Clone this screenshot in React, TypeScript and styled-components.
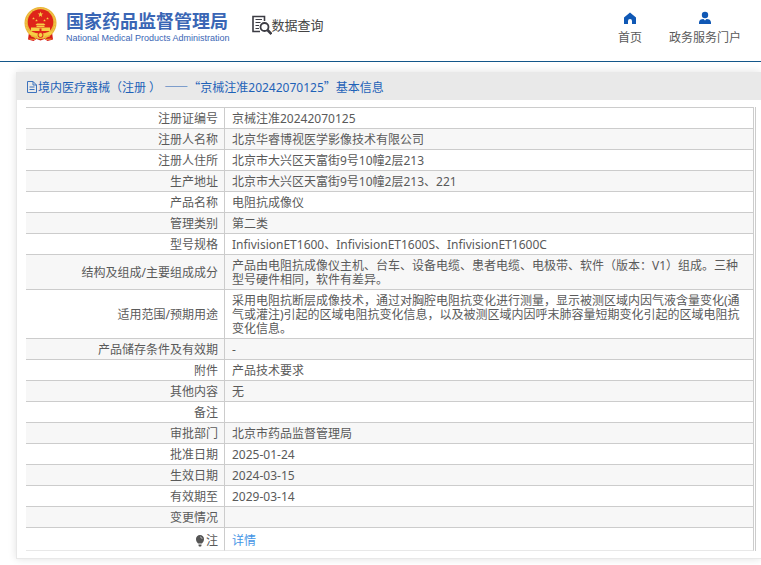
import React from 'react';
import styled, { createGlobalStyle } from 'styled-components';

const GlobalStyle = createGlobalStyle`
  * { box-sizing: border-box; }
  body {
    margin: 0;
    overflow-x: hidden;
    background: #fff;
    color: #5a5a5a;
    font-family: "Noto Sans", "Noto Sans CJK SC", sans-serif;
    font-size: 12px;
    line-height: 14px;
    text-spacing-trim: space-all;
  }
`;

const Header = styled.header`
  display: flex;
  align-items: flex-start;
  height: 62px;
  padding: 0 20px 0 24px;
  border-bottom: 1px solid #14578a;
`;

const Brand = styled.a`
  display: flex;
  align-items: flex-start;
  gap: 9px;
  padding-top: 6px;
  color: #3a66b5;
  text-decoration: none;
  white-space: nowrap;
`;

const BrandNames = styled.span`
  display: flex;
  flex-direction: column;
  padding-top: 2px;
`;

const BrandName = styled.strong`
  font-family: "Noto Sans CJK SC", sans-serif;
  font-size: 18px;
  line-height: 24px;
  font-weight: 700;
`;

const BrandSubname = styled.span`
  font-family: "Liberation Sans", sans-serif;
  font-size: 9px;
  line-height: 12px;
`;

const QueryLink = styled.a`
  display: flex;
  align-items: center;
  margin-left: 22px;
  padding-top: 15px;
  color: #444;
  font-size: 13px;
  line-height: 20px;
  text-decoration: none;
  white-space: nowrap;
`;

const Nav = styled.nav`
  display: flex;
  gap: 27px;
  margin-left: auto;
  padding-top: 11px;
`;

const NavLink = styled.a`
  display: flex;
  flex-direction: column;
  align-items: center;
  gap: 4px;
  color: #5a5a5a;
  line-height: 18px;
  text-decoration: none;
  white-space: nowrap;
`;

const Panel = styled.main`
  margin: 10px 0 7px 16px;
  padding-bottom: 7px;
  border: 1px solid #e8e8e8;
  border-width: 0 0 1px 1px;
  box-shadow: 0 0 8px rgba(0, 0, 0, 0.12);
`;

const PanelTitle = styled.h1`
  display: flex;
  align-items: center;
  gap: 1px;
  height: 28px;
  margin: 0;
  padding: 2px 10px 0;
  background: #e9e9e9;
  color: #1e62b8;
  font-size: 12px;
  font-weight: 400;
  white-space: pre;
`;

const WidePunctuation = styled.span`
  font-family: "Noto Sans CJK SC", sans-serif;
`;

const TableFrame = styled.div`
  margin: 7px 5px 0 9px;
  padding-right: 1px;
  border-right: 1px solid #ccc;
`;

const Table = styled.table`
  width: 100%;
  border-collapse: separate;
  border-spacing: 0;
  border-top: 1px solid #ccc;
`;

const Label = styled.th`
  width: 199px;
  height: 21px;
  padding: 4px 6px 2px;
  border: 1px solid #ccc;
  border-width: 0 1px 1px 0;
  font-weight: 400;
  text-align: right;
`;

const Value = styled.td`
  height: 21px;
  padding: 4px 6px 2px 7px;
  border: 1px solid #ccc;
  border-width: 0 1px 1px 0;
`;

const Row = styled.tr`
  &:nth-child(even) { background: #f7f7f7; }
  &:last-child > * {
    height: 23px;
    padding-top: 6px;
    padding-bottom: 2px;
    border-bottom-color: #e8e8e8;
  }
`;

const DetailLink = styled.a`
  color: #4595e6;
  text-decoration: none;
`;

const NoteLabel = styled.span`
  display: flex;
  align-items: center;
  justify-content: flex-end;
  gap: 1px;
`;

const star = (cx: number, cy: number, r: number) =>
  Array.from({ length: 10 }, (_, i) => {
    const a = (Math.PI * i) / 5 - Math.PI / 2;
    const d = i % 2 ? r * 0.4 : r;
    return `${cx + d * Math.cos(a)},${cy + d * Math.sin(a)}`;
  }).join(' ');

const Emblem = () => (
  <svg width="33" height="36" viewBox="0 0 33 36" aria-hidden="true">
    <path d="M5 26 4 33.500 9.500 35l3-2 4 1.500 4-1.500 3 2 5.500-1.500L28 26Z" fill="#d81e17" />
    <circle cx="16.500" cy="17" r="16" fill="#eab536" />
    <circle cx="16.500" cy="17" r="14.500" fill="none" stroke="#f2c856" strokeWidth="1" strokeDasharray="2 1" />
    <circle cx="16.500" cy="16" r="12.800" fill="#df2419" />
    <g fill="#f6cf45">
      <polygon points={star(16.5, 8.5, 3)} />
      <polygon points={star(9.5, 12.5, 1.4)} />
      <polygon points={star(12.5, 14.5, 1.4)} />
      <polygon points={star(20.5, 14.5, 1.4)} />
      <polygon points={star(23.5, 12.5, 1.4)} />
      <path d="M11.500 19 13 17.500h7l1.500 1.500ZM12.500 19.500h8v1.500h-8ZM7 21.500h19V25H7Z" />
      <path d="M4 25.500c5-.500 7 2 12.500 2s7.500-2.500 12.500-2l-2.500 3.500c-4 0-5 1.500-10 1.500S10.500 29 6.500 29Z" />
    </g>
    <path d="M15.500 22.500h2V25h-2Z" fill="#df2419" />
    <circle cx="16.500" cy="29" r="2.500" fill="#f6cf45" stroke="#df2419" />
    <path d="m7 30 5 1-1 2.500L5.500 33M26 30l-5 1 1 2.500 5.500-.500" fill="none" stroke="#efb933" strokeWidth=".8" />
  </svg>
);

const QueryIcon = () => (
  <svg width="20" height="20" viewBox="0 0 20 20" fill="none" stroke="#3c3c44" aria-hidden="true">
    <path d="M8 16.500H1v-15h11.500V6" strokeWidth="1.600" />
    <path d="M3.500 4.500H10M3.500 7.500h5M3.500 10.500H7M3.500 13.500H7" />
    <circle cx="12.500" cy="12" r="4" strokeWidth="1.800" />
    <path d="m15.500 15 4 4" strokeWidth="2.600" />
  </svg>
);

const HomeIcon = () => (
  <svg width="14" height="14" viewBox="0 0 14 14" fill="#1058b5" aria-hidden="true">
    <path d="M7 1.500 1 6.500V13h4v-3a2 2 0 0 1 4 0v3h4V6.500Z" />
  </svg>
);

const UserIcon = () => (
  <svg width="14" height="14" viewBox="0 0 14 14" fill="#1058b5" aria-hidden="true">
    <circle cx="7" cy="4" r="3.200" />
    <path d="M1 13v-1.500C1 9 3 8 5.500 8L7 9.500 8.500 8C11 8 13 9 13 11.500V13Z" />
  </svg>
);

const DocumentIcon = () => (
  <svg width="10" height="12" viewBox="0 0 10 12" fill="none" stroke="#3d73bd" aria-hidden="true">
    <path d="M.5.500H6L9.500 4v7.500h-9ZM6 .500V4h3.500M2.500 6h5M2.500 8.500h5" />
  </svg>
);

const BulbIcon = () => (
  <svg width="10" height="12" viewBox="0 0 10 12" aria-hidden="true">
    <path d="M5 0a4 4 0 0 1 4 4.200C9 6.700 7.500 7.500 7 8.500H3C2.500 7.500 1 6.700 1 4.200A4 4 0 0 1 5 0ZM3.500 9.500h3v1L6 11.500H4l-.5-1Z" fill="#555" />
    <path d="M5 2c1.200 0 2 .8 2 2" fill="none" stroke="#ddd" strokeWidth=".7" />
  </svg>
);

const records: [string, string][] = [
  ['注册证编号', '京械注准20242070125'],
  ['注册人名称', '北京华睿博视医学影像技术有限公司'],
  ['注册人住所', '北京市大兴区天富街9号10幢2层213'],
  ['生产地址', '北京市大兴区天富街9号10幢2层213、221'],
  ['产品名称', '电阻抗成像仪'],
  ['管理类别', '第二类'],
  ['型号规格', 'InfivisionET1600、InfivisionET1600S、InfivisionET1600C'],
  ['结构及组成/主要组成成分', '产品由电阻抗成像仪主机、台车、设备电缆、患者电缆、电极带、软件（版本：V1）组成。三种型号硬件相同，软件有差异。'],
  ['适用范围/预期用途', '采用电阻抗断层成像技术，通过对胸腔电阻抗变化进行测量，显示被测区域内因气液含量变化(通气或灌注)引起的区域电阻抗变化信息，以及被测区域内因呼末肺容量短期变化引起的区域电阻抗变化信息。'],
  ['产品储存条件及有效期', '-'],
  ['附件', '产品技术要求'],
  ['其他内容', '无'],
  ['备注', ''],
  ['审批部门', '北京市药品监督管理局'],
  ['批准日期', '2025-01-24'],
  ['生效日期', '2024-03-15'],
  ['有效期至', '2029-03-14'],
  ['变更情况', ''],
];

export default function App() {
  return (
    <div lang="zh-CN">
      <GlobalStyle />
      <Header>
        <Brand href="#">
          <Emblem />
          <BrandNames>
            <BrandName>国家药品监督管理局</BrandName>
            <BrandSubname>National Medical Products Administration</BrandSubname>
          </BrandNames>
        </Brand>
        <QueryLink href="#query"><QueryIcon />数据查询</QueryLink>
        <Nav>
          <NavLink href="#home"><HomeIcon />首页</NavLink>
          <NavLink href="#portal"><UserIcon />政务服务门户</NavLink>
        </Nav>
      </Header>
      <Panel>
        <PanelTitle>
          <DocumentIcon />
          <span>
            境内医疗器械（注册 ） <WidePunctuation>——“</WidePunctuation>京械注准20242070125<WidePunctuation>”</WidePunctuation>基本信息
          </span>
        </PanelTitle>
        <TableFrame>
          <Table>
            <tbody>
              {records.map(([label, value]) => (
                <Row key={label}>
                  <Label scope="row">{label}</Label>
                  <Value>{value}</Value>
                </Row>
              ))}
              <Row>
                <Label scope="row"><NoteLabel><BulbIcon />注</NoteLabel></Label>
                <Value><DetailLink href="#detail">详情</DetailLink></Value>
              </Row>
            </tbody>
          </Table>
        </TableFrame>
      </Panel>
    </div>
  );
}
